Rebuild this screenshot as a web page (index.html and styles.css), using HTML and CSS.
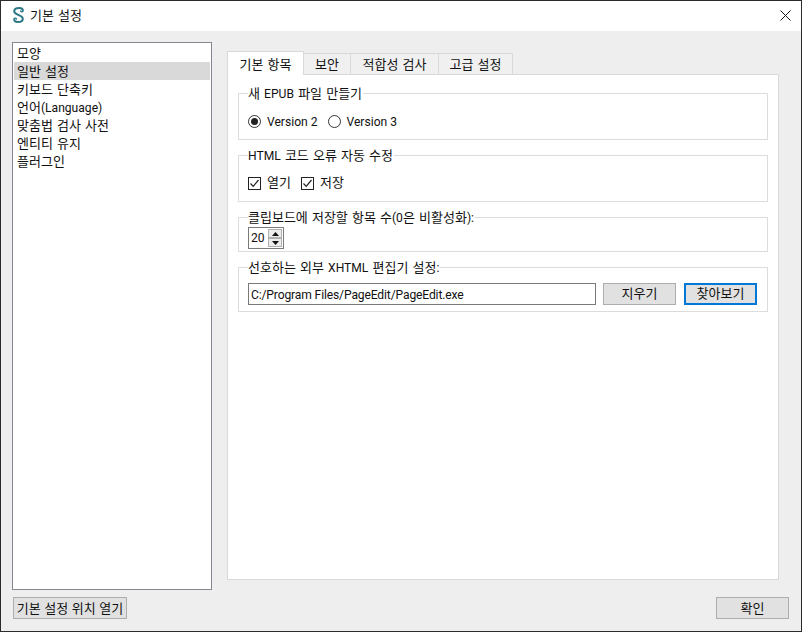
FILE: index.html
```html
<!DOCTYPE html>
<html lang="ko">
<head>
<meta charset="utf-8">
<title>기본 설정</title>
<link rel="stylesheet" href="styles.css">
</head>
<body>
<div class="window">
  <header class="titlebar">
    <svg class="logo" width="13" height="16" viewBox="0 0 13 16" fill="none" stroke="#2a7885" stroke-linecap="round">
      <path d="M10.6 4.2C11.4 2.6 10.2 1 7.4 1C4.4 1 2.2 2.2 2.2 4.3C2.2 6.4 4.6 7.2 6.6 8C8.6 8.8 10.8 9.6 10.8 11.7C10.8 13.8 8.6 15 5.8 15C3 15 1.6 13.4 2.4 11.8" stroke-width="2"/>
      <path d="M10.6 4.2C10 5.4 8.5 5 8.6 3.8M2.4 11.8C3 10.6 4.5 11 4.4 12.2" stroke-width="1.2"/>
    </svg>
    <span class="title">기본 설정</span>
    <svg class="close" width="11" height="11" viewBox="0 0 11 11" stroke="#111" stroke-width="1" fill="none"><path d="M.5 .5L10.5 10.5M10.5 .5L.5 10.5"/></svg>
  </header>
  <main class="content">
    <div class="columns">
      <ul class="list">
        <li>모양</li>
        <li class="selected">일반 설정</li>
        <li>키보드 단축키</li>
        <li>언어<span class="lat">(Language)</span></li>
        <li>맞춤법 검사 사전</li>
        <li>엔티티 유지</li>
        <li>플러그인</li>
      </ul>
      <section class="tabs">
        <nav class="tabbar">
          <span class="tab active">기본 항목</span>
          <span class="tab t2">보안</span>
          <span class="tab t3">적합성 검사</span>
          <span class="tab t4">고급 설정</span>
        </nav>
        <div class="pane">
          <fieldset class="group g1">
            <legend>새 <span class="lat">EPUB</span> 파일 만들기</legend>
            <div class="row">
              <span class="radio on"></span><span class="lbl-lat lat l1">Version 2</span>
              <span class="radio"></span><span class="lbl-lat lat">Version 3</span>
            </div>
          </fieldset>
          <fieldset class="group g1">
            <legend><span class="lat">HTML</span> 코드 오류 자동 수정</legend>
            <div class="row">
              <svg class="check" width="13" height="13" viewBox="0 0 13 13" fill="none"><rect x=".5" y=".5" width="12" height="12" stroke="#222"/><path d="M2.5 6.5L5.2 9.3L10.5 3" stroke="#222" stroke-width="1.2"/></svg><span class="lbl l2">열기</span>
              <svg class="check" width="13" height="13" viewBox="0 0 13 13" fill="none"><rect x=".5" y=".5" width="12" height="12" stroke="#222"/><path d="M2.5 6.5L5.2 9.3L10.5 3" stroke="#222" stroke-width="1.2"/></svg><span class="lbl">저장</span>
            </div>
          </fieldset>
          <fieldset class="group g3">
            <legend>클립보드에 저장할 항목 수<span class="lat">(0</span>은 비활성화<span class="lat">):</span></legend>
            <div class="spin">
              <span class="spinval lat">20</span>
              <span class="spinbtns">
                <span class="spinbtn"><svg width="7" height="4" viewBox="0 0 7 4"><path d="M3.5 0L7 4H0Z" fill="#111"/></svg></span>
                <span class="spinbtn"><svg width="7" height="4" viewBox="0 0 7 4"><path d="M0 0H7L3.5 4Z" fill="#111"/></svg></span>
              </span>
            </div>
          </fieldset>
          <fieldset class="group g4">
            <legend>선호하는 외부 <span class="lat">XHTML</span> 편집기 설정<span class="lat">:</span></legend>
            <div class="pathrow">
              <span class="input lat">C:/Program Files/PageEdit/PageEdit.exe</span>
              <button class="btn b1">지우기</button>
              <button class="btn b1 focus">찾아보기</button>
            </div>
          </fieldset>
        </div>
      </section>
    </div>
    <footer class="footer">
      <button class="btn open">기본 설정 위치 열기</button>
      <button class="btn ok">확인</button>
    </footer>
  </main>
</div>
</body>
</html>
```
FILE: styles.css
```css
* { box-sizing: border-box; }
html, body { margin: 0; padding: 0; }
body {
  font: 13px/16px "Noto Sans CJK KR", sans-serif;
  word-spacing: .5px;
  color: #111;
}
.lat { font-family: Roboto, sans-serif; font-size: 12.1px; word-spacing: 0; }
.window {
  width: 802px; height: 632px;
  border: 1px solid #2b2b2b;
  background: #eeeeee;
  display: flex; flex-direction: column;
}
.titlebar {
  flex: none;
  height: 30px; background: #fff;
  display: flex; align-items: center;
  padding: 0 10px 2px 11px;
}
.title { margin-left: 5px; flex: 1; }
.content { flex: 1; padding: 11px 12px 12px 11px; display: flex; flex-direction: column; }
.columns { display: flex; align-items: flex-start; height: 548px; flex: none; }
.list {
  list-style: none; margin: 0; padding: 1px;
  width: 200px; height: 548px;
  border: 1px solid #828790; background: #fff;
}
.list li { height: 18px; line-height: 18px; padding-left: 3px; }
.list li.selected { background: #d9d9d9; }
.tabs { margin-left: 15px; width: 552px; height: 529px; display: flex; flex-direction: column; margin-top: 9px; }
.tabbar { display: flex; height: 23px; flex: none; align-items: flex-end; position: relative; z-index: 1; }
.tab {
  height: 21px; border: 1px solid #d9d9d9; border-left: 0; border-bottom: 0;
  background: #f0f0f0; display: flex; align-items: center; justify-content: center;
}
.tab.active { height: 24px; margin-bottom: -1px; width: 77px; background: #fff; border-left: 1px solid #d9d9d9; }
.t2 { width: 47px; }
.t3 { width: 88px; }
.t4 { width: 74px; }
.pane {
  flex: 1; background: #fff; border: 1px solid #d9d9d9;
  padding: 10px 10px 0;
  display: flex; flex-direction: column; gap: 7px;
}
.group {
  margin: 0; padding: 0 9px; min-width: 0;
  border: 1px solid #dcdcdc;
  display: block;
}
.group legend { padding: 0 1px 0 0; margin-left: 0; line-height: 16px; height: 16px; }
.g1 { height: 55px; }
.g3 { height: 43px; }
.g4 { height: 53px; }
.row { display: flex; align-items: center; height: 16px; margin-top: 12px; }
.radio {
  width: 13px; height: 13px; border: 1px solid #333; border-radius: 50%;
  display: flex; align-items: center; justify-content: center; margin-right: 6px;
}
.radio.on::after { content: ""; width: 7px; height: 7px; border-radius: 50%; background: #222; }
.check { margin-right: 6px; }
.lbl-lat { margin-top: 2px; }
.lbl { margin-bottom: 2px; }
.l1 { margin-right: 10px; }
.l2 { margin-right: 10px; }
.spin {
  display: flex; width: 36px; height: 22px; margin-top: 2px;
  border: 1px solid #7a7a7a; background: #fff; padding: 1px;
}
.spinval { flex: 1; padding-left: 1px; line-height: 18px; }
.spinbtns { width: 14px; display: flex; flex-direction: column; }
.spinbtn {
  flex: 1; background: #ececec; border: 1px solid #b0b0b0;
  display: flex; align-items: center; justify-content: center;
}
.pathrow { display: flex; align-items: center; margin-top: 8px; }
.input {
  width: 348px; height: 22px; border: 1px solid #7a7a7a; background: #fff;
  line-height: 22px; padding-left: 2px; letter-spacing: -.14px;
}
.btn {
  font: inherit; color: inherit; padding: 0; height: 22px; word-spacing: 0;
  background: #e1e1e1; border: 1px solid #adadad;
}
.b1 { width: 73px; margin-left: 7px; padding-bottom: 2px; }
.b1.focus { margin-left: 8px; border: 2px solid #0078d7; }
.footer { display: flex; flex: none; justify-content: space-between; margin-top: 7px; padding-left: 1px; }
.open { width: 114px; }
.ok { width: 73px; }
```
